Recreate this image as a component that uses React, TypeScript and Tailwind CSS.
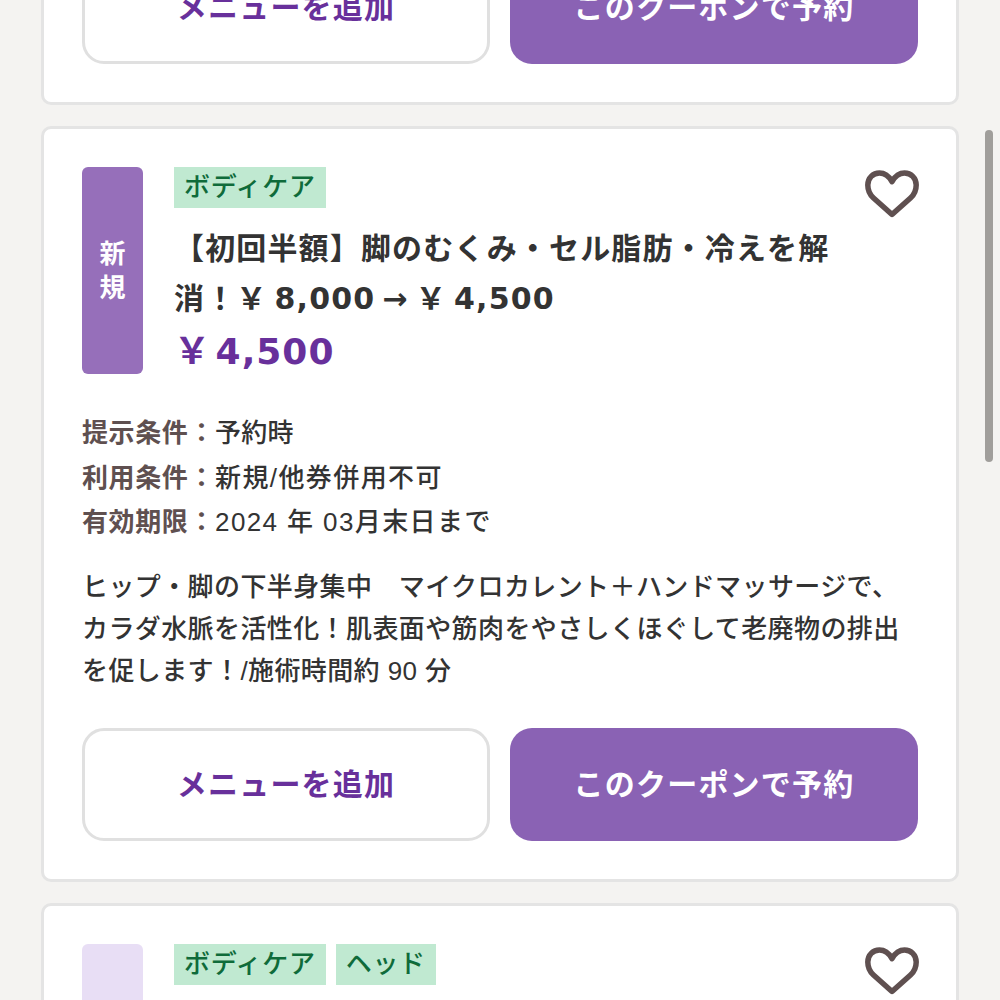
const meta = [
  { label: '提示条件：', value: '予約時', spacing: 'tracking-[0.2px]' },
  { label: '利用条件：', value: '新規/他券併用不可', spacing: 'tracking-[1.4px]' },
  { label: '有効期限：', value: '2024 年 03月末日まで', spacing: 'tracking-[1.4px]' },
]

function Tag({ label }: { label: string }) {
  return <span className="bg-[#c0e9d1] text-[#0f6b3a] h-[41px] px-[10px] flex items-center text-[26px] tracking-[0.7px] font-medium">{label}</span>
}

function FavButton() {
  return (
    <svg className="absolute right-[37px] top-[41px] text-[#5f5050]" width="54" height="48" viewBox="0 0 54 48" fill="none" stroke="currentColor" strokeWidth="5.5" strokeLinejoin="round" strokeLinecap="round">
      <path d="M27 44.5 L8.5 28 C3.5 23.5 2.8 19 2.8 15 C2.8 8 8 3 14.5 3 C19.5 3 23.5 5.5 27 11.5 C30.5 5.5 34.5 3 39.5 3 C46 3 51.2 8 51.2 15 C51.2 19 50.5 23.5 45.5 28 Z" />
    </svg>
  )
}

function Buttons() {
  return (
    <div className="grid grid-cols-2 gap-[20px]">
      <button className="h-[113px] rounded-[22px] bg-white border-[3px] border-[#e0e0e0] text-[#68309b] text-[30px] tracking-[1.2px] font-bold">メニューを追加</button>
      <button className="h-[113px] rounded-[22px] bg-[#8a62b4] text-white text-[30px] tracking-[1.2px] font-bold">このクーポンで予約</button>
    </div>
  )
}

export default function App() {
  return (
    <div className="relative h-[1000px] overflow-hidden bg-[#f4f3f1] font-['Liberation_Sans','Noto_Sans_CJK_JP',sans-serif]">
      <div className="flex flex-col gap-[21px] pl-[41px] w-[959px] -mt-[90px]">
        <div className="bg-white border-[3px] border-[#e4e4e4] rounded-[10px] p-[38px]">
          <Buttons />
        </div>

        <div className="relative bg-white border-[3px] border-[#e4e4e4] rounded-[10px] p-[38px]">
          <FavButton />
          <div className="flex gap-[31px] h-[207px]">
            <div className="w-[61px] shrink-0 rounded-[6px] bg-[#966fba] text-white text-[26px] font-bold leading-[34px] flex flex-col items-center justify-center">
              <span>新</span>
              <span>規</span>
            </div>
            <div>
              <div className="flex gap-[10px]"><Tag label="ボディケア" /></div>
              <h2 className="mt-[16px] w-[680px] text-[30px] leading-[50px] tracking-[1.15px] font-bold text-[#333333] font-['DejaVu_Sans','Noto_Sans_CJK_JP',sans-serif]">
                {'【初回半額】脚のむくみ・セル脂肪・冷えを解消！￥\u20098,000\u2009→\u2009￥\u20094,500'}
              </h2>
              <p className="text-[36px] leading-[56px] tracking-[1px] font-bold text-[#68309b] font-['DejaVu_Sans','Noto_Sans_CJK_JP',sans-serif]">{'￥\u200a4,500'}</p>
            </div>
          </div>

          <div className="mt-[37px] text-[26px] leading-[44.5px] font-medium text-[#333333]">
            {meta.map((row) => (
              <div key={row.label}>
                <span className="font-bold tracking-[0.6px] text-[#5f5050]">{row.label}</span>
                <span className={row.spacing}>{row.value}</span>
              </div>
            ))}
          </div>

          <p className="mt-[21px] text-[26px] leading-[42px] tracking-[0.4px] font-medium text-[#333333]">
            ヒップ・脚の下半身集中　マイクロカレント＋ハンドマッサージで、<br />
            カラダ水脈を活性化！肌表面や筋肉をやさしくほぐして老廃物の排出<br />
            を促します！/施術時間約 90 分
          </p>

          <div className="mt-[36px]">
            <Buttons />
          </div>
        </div>

        <div className="relative bg-white border-[3px] border-[#e4e4e4] rounded-[10px] p-[38px]">
          <FavButton />
          <div className="flex gap-[31px]">
            <div className="w-[61px] h-[207px] shrink-0 rounded-[6px] bg-[#e8def5]" />
            <div className="flex gap-[10px] items-start">
              <Tag label="ボディケア" />
              <Tag label="ヘッド" />
            </div>
          </div>
        </div>
      </div>

      {/* scrollbar */}
      <div className="absolute left-[985px] top-[130px] w-[8px] h-[332px] rounded-full bg-[#a09e9b]" />
    </div>
  )
}
